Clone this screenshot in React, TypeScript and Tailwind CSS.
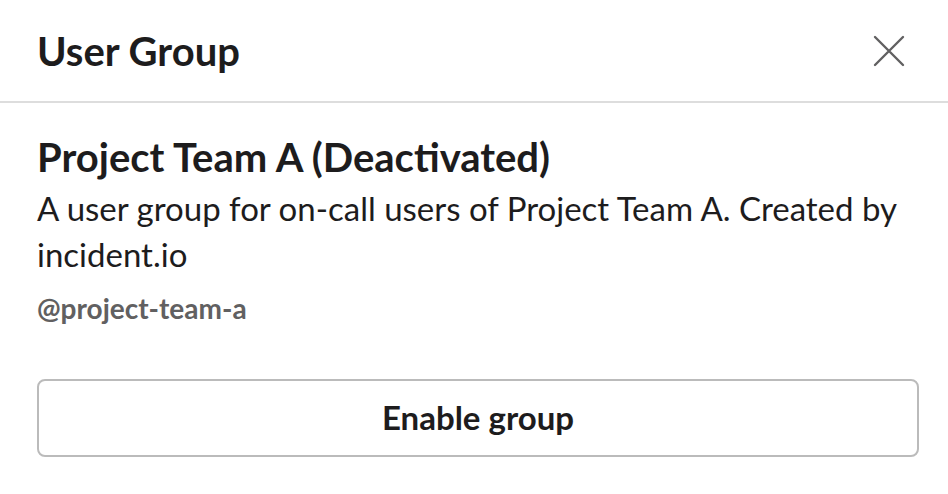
export default function App() {
  return (
    <div className="w-[948px] h-[494px] bg-white overflow-hidden" style={{ fontFamily: "Lato, 'Noto Sans', sans-serif" }}>
      <div className="h-[103px] flex items-center justify-between pl-[37px] pr-[43px] border-b-2 border-[#dddddd]">
        <div className="text-[40px] font-bold text-[#1d1c1d] leading-none">User Group</div>
        <svg width="32" height="32" viewBox="0 0 32 32" className="text-[#616061]">
          <path d="M2 2 L30 30 M30 2 L2 30" stroke="currentColor" strokeWidth="2.4" strokeLinecap="round" />
        </svg>
      </div>
      <div className="px-[37px] pt-[30px]">
        <div className="text-[40px] font-bold text-[#1d1c1d] leading-[48px]">Project Team A (Deactivated)</div>
        <div className="text-[33px] text-[#1d1c1d] leading-[46px] mt-[4px]">
          A user group for on-call users of Project Team A. Created by incident.io
        </div>
        <div className="text-[28px] font-bold text-[#616061] leading-[36px] mt-[13px]">@project-team-a</div>
        <button className="mt-[53px] w-[882px] h-[78px] rounded-[8px] border-2 border-[#bbbbbb] text-[33px] font-bold text-[#1d1c1d] flex items-center justify-center">
          Enable group
        </button>
      </div>
    </div>
  );
}
